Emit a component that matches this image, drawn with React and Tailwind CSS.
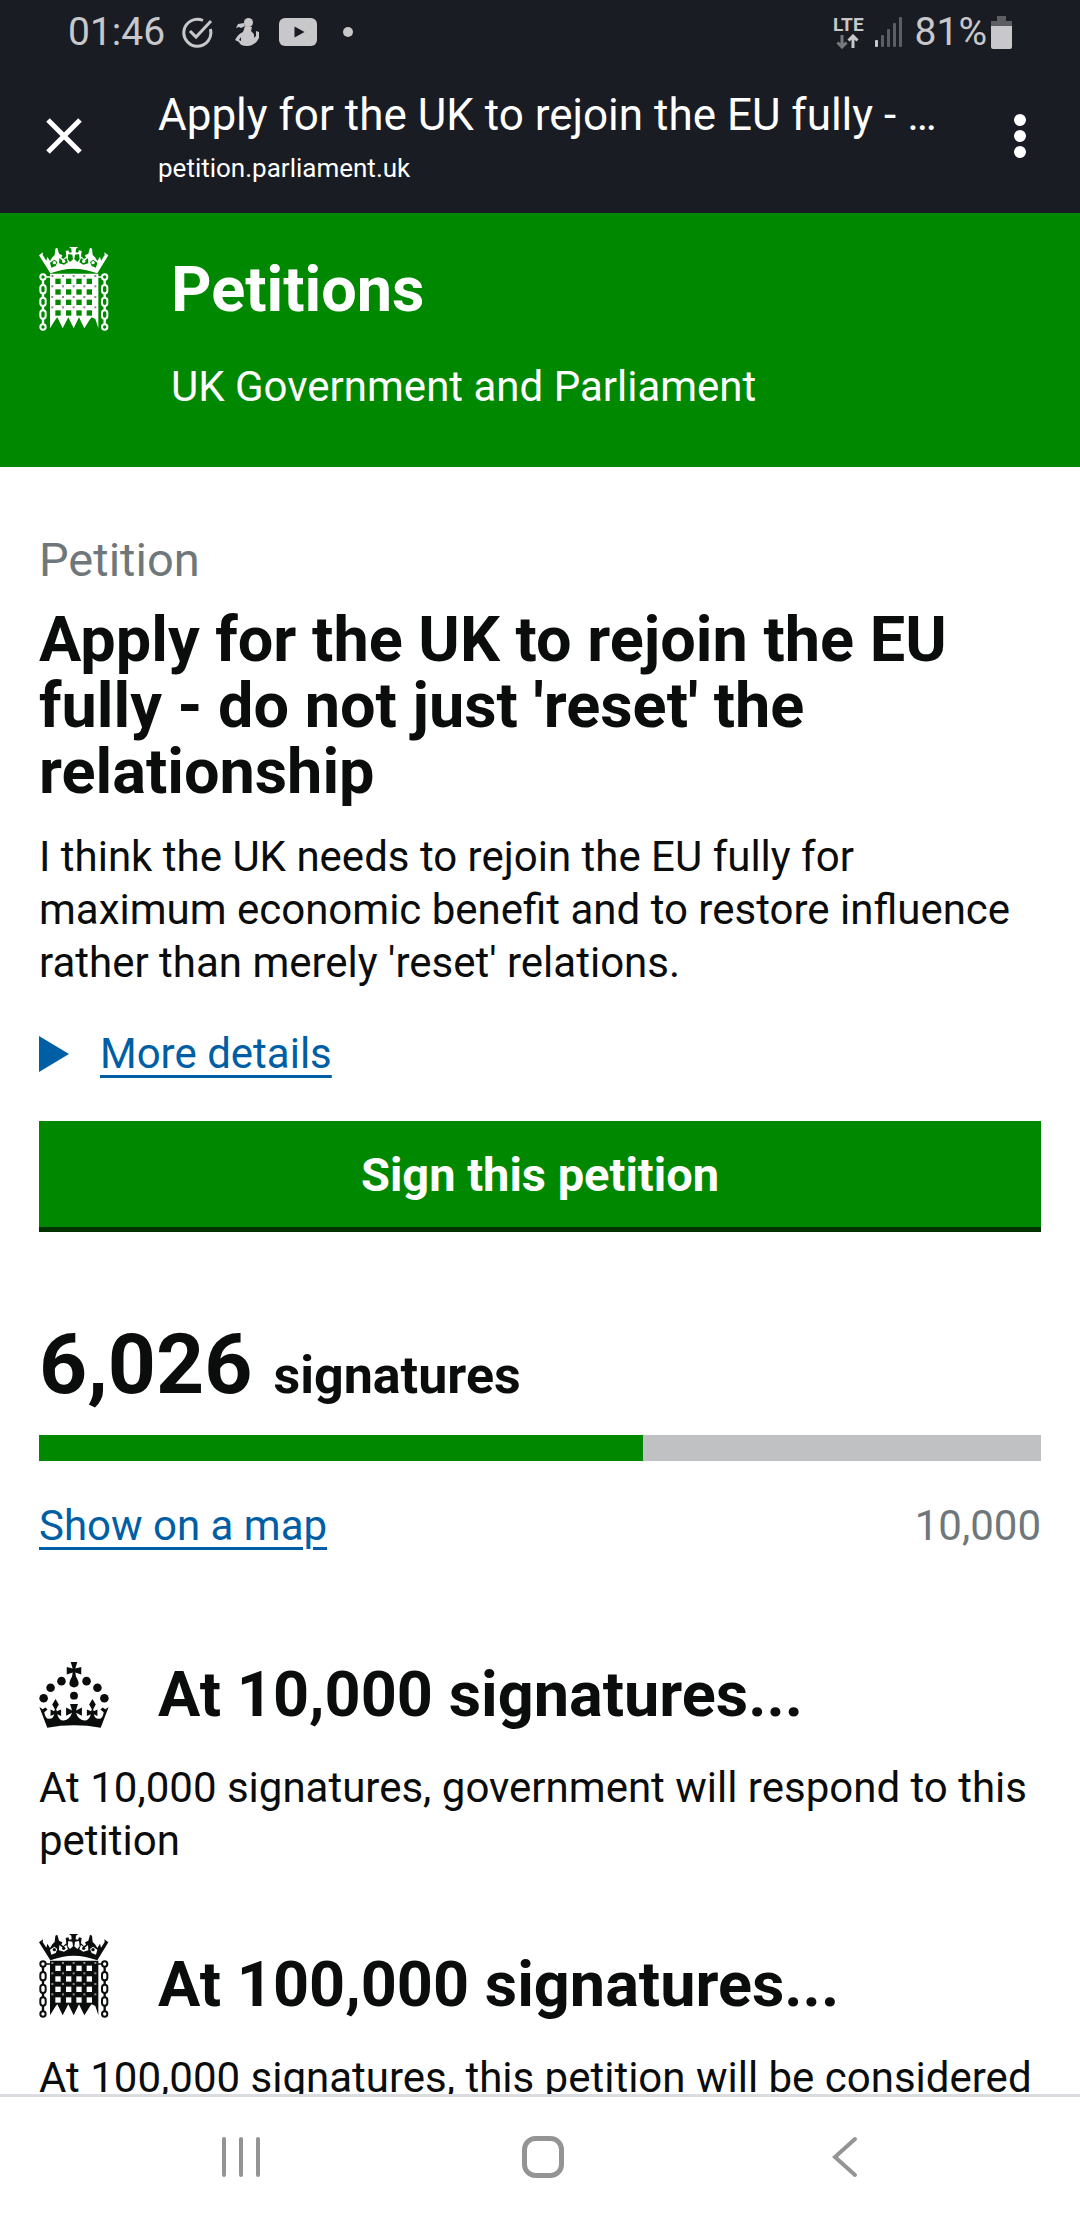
import React from 'react';

const SIGNATURES = 6026;
const TARGET = 10000;

const GRID_COLS = [49, 81, 112, 143];
const GRID_ROWS = [95, 127, 158, 190];
const STUD_COLS = [40, 72, 104, 136, 169];
const STUD_ROWS = [87, 118, 150, 181];

const Chain = ({ x }) => (
    <g fill="none" stroke="currentColor" strokeWidth="6">
        <circle cx={x} cy="90" r="8" />
        <rect x={x - 8} y="114" width="16" height="25" rx="8" />
        <rect x={x - 8} y="152" width="16" height="25" rx="8" />
        <rect x={x - 8} y="190" width="16" height="25" rx="8" />
        <circle cx={x} cy="240" r="8" />
        <path d={`M${x} 98V114M${x} 139V152M${x} 177V190M${x} 215V232`} strokeWidth="7" />
    </g>
);

const Portcullis = ({ holeClass, className }) => (
    <svg viewBox="0 0 210 252" className={className} aria-hidden="true">
        <Chain x={12} />
        <Chain x={197} />
        <path d="M20 90H34M175 90H190" stroke="currentColor" strokeWidth="5" />
        <path
            d="M33 80H178V244L169 216L158 211L153 217L136 244L120 211L104 244L88 211L71 244L55 211L50 217L33 244Z"
            fill="currentColor"
        />
        <g className={holeClass}>
            {GRID_ROWS.map(y => GRID_COLS.map(x => (
                <rect key={`${x}-${y}`} x={x} y={y} width="16" height="16" />
            )))}
        </g>
        <g fill="#8a8a8a">
            {STUD_ROWS.map(y => STUD_COLS.map(x => (
                <rect key={`${x}-${y}`} x={x - 3} y={y - 3} width="6" height="6" />
            )))}
        </g>
        {/* coronet */}
        <path
            d="M34 79L0 25L12 16L11 24L22 41L25 29L33 42L40 31L47 24L49 5L55 2L60 20L70 25L67 32L73 36L82 28L80 12L88 10L91 17L98 16L97 5L90 0H118L111 5L110 16L117 17L120 10L128 12L126 28L135 36L141 32L138 25L148 20L153 2L159 5L161 24L168 31L175 42L183 29L186 41L197 24L196 16L208 25L175 79Q104 51 34 79Z"
            fill="currentColor"
        />
        <g className={holeClass}>
            <path d="M33 47L46 38L55 45L50 57L37 62Z" />
            <path d="M61 33L71 41L82 33L87 46L75 53L60 49Z" />
            <path d="M88 21L100 23L102 37L93 45L86 37Z" />
            <path d="M120 21L108 23L106 37L115 45L122 37Z" />
            <path d="M147 33L137 41L126 33L121 46L133 53L148 49Z" />
            <path d="M175 47L162 38L153 45L158 57L171 62Z" />
        </g>
        <g fill="currentColor">
            <circle cx="46" cy="47" r="5" />
            <circle cx="74" cy="43" r="5" />
            <circle cx="134" cy="43" r="5" />
            <circle cx="162" cy="47" r="5" />
        </g>
    </svg>
);

const Crown = ({ className }) => (
    <svg viewBox="0 0 210 200" className={className} fill="currentColor" aria-hidden="true">
        <circle cx="13" cy="110" r="13" />
        <circle cx="34" cy="78" r="13" />
        <circle cx="67" cy="58" r="13" />
        <circle cx="143" cy="58" r="13" />
        <circle cx="176" cy="78" r="13" />
        <circle cx="197" cy="110" r="13" />
        <circle cx="105" cy="102" r="12" />
        {/* orb and cross */}
        <path d="M95 0H115L109 20L127 15V38L109 32L111 44Q119 58 119 65A14 12 0 0 1 91 65Q91 58 99 44L101 32L83 38V15L101 20Z" />
        {/* circlet */}
        <path d="M24 199L0 136L10 143L18 138L25 144L15 152Q18 174 31 172Q42 172 45 158L34 164V144L45 149L47 143L39 129L49 112L59 129L51 143L53 149L66 144V164L54 158Q60 178 74 177Q92 176 99 154L81 163V138L99 147L93 127H117L111 147L129 138V163L111 154Q118 176 136 177Q150 178 156 158L144 164V144L157 149L159 143L151 129L161 112L171 129L163 143L165 149L176 144V164L165 158Q168 172 179 172Q192 174 195 152L185 144L192 138L200 143L210 136L186 199Q105 185 24 199Z" />
    </svg>
);

const StatusBar = () => (
    <div className="flex h-16 items-center justify-between px-17 text-[#c8c8ca]">
        <div className="flex items-center">
            <span className="text-[39px] leading-[46px]">01:46</span>
            <svg viewBox="0 0 32 32" className="ml-4 size-8" fill="none" stroke="currentColor" strokeWidth="3">
                <path d="M22 4.5A13.500 13.500 0 1 0 29.300 13" />
                <path d="M9 15L15 21L30 5" />
            </svg>
            <svg viewBox="0 0 24 28" className="ml-[22px] h-7 w-6" fill="currentColor">
                <circle cx="13.500" cy="4.500" r="4.500" />
                <path d="M9 5L3 6L1 10L4 9L6 10L10 8ZM10 8L17 9L16 13Q20 16 19 20L21 18L21 13L24 14V20Q20 28 12 28Q5 28 4 24L0 22Q3 16 8 14ZM6 19L4 22L6 23Z" fillRule="evenodd" />
            </svg>
            <svg viewBox="0 0 38 28" className="ml-5 h-7 w-[38px]">
                <rect width="38" height="28" rx="6" fill="currentColor" />
                <path d="M15.500 8.500L25.500 14L15.500 19.500Z" fill="#1a1c24" />
            </svg>
            <span className="ml-[26px] size-[10px] rounded-full bg-current" />
        </div>
        <div className="flex items-center">
            <div className="flex flex-col items-center">
                <span className="text-[19px] font-bold leading-[18px]">LTE</span>
                <svg viewBox="0 0 24 15" className="h-[15px] w-6" fill="none" strokeWidth="3">
                    <path d="M6 1V13M1.500 8.500L6 13L10.500 8.500" stroke="#77787c" />
                    <path d="M17 14V2M12.500 6.500L17 2L21.500 6.500" stroke="currentColor" />
                </svg>
            </div>
            <svg viewBox="0 0 28 30" className="ml-[11px] h-[30px] w-7" fill="#5d5e63">
                <rect x="0" y="23" width="3" height="7" rx="1" fill="#c8c8ca" />
                <rect x="6" y="18" width="3" height="12" rx="1" />
                <rect x="12" y="12" width="3" height="18" rx="1" />
                <rect x="18" y="6" width="3" height="24" rx="1" />
                <rect x="24" y="0" width="3" height="30" rx="1" />
            </svg>
            <span className="ml-3 text-[39px] leading-[46px]">81%</span>
            <svg viewBox="0 0 21 33" className="ml-1 h-[33px] w-[21px]">
                <path d="M6 0H15V5H21V11H0V5H6Z" fill="#5d5e63" />
                <path d="M0 10H21V31Q21 33 19 33H2Q0 33 0 31Z" fill="currentColor" />
            </svg>
        </div>
    </div>
);

const BrowserBar = () => (
    <div className="flex h-[149px] pl-[46px] pr-[49px] text-white">
        <button aria-label="Close" className="mt-[54px] size-9 shrink-0">
            <svg viewBox="0 0 36 36" className="size-9" fill="none" stroke="currentColor" strokeWidth="5">
                <path d="M2 2L34 34M34 2L2 34" />
            </svg>
        </button>
        <div className="ml-[76px] mt-6 min-w-0 flex-1">
            <div className="truncate text-[44px] leading-[54px]">
                Apply for the UK to rejoin the EU fully - do not just 'reset' the relationship
            </div>
            <div className="mt-[10px] text-[26px] leading-8">petition.parliament.uk</div>
        </div>
        <button aria-label="More options" className="ml-[70px] mt-[50px] h-11 w-[22px] shrink-0">
            <svg viewBox="0 0 22 44" className="h-11 w-[22px]" fill="currentColor">
                <circle cx="11" cy="6" r="6" />
                <circle cx="11" cy="22" r="6" />
                <circle cx="11" cy="38" r="6" />
            </svg>
        </button>
    </div>
);

const Threshold = ({ icon, title, children }) => (
    <section>
        <div className="flex items-end gap-[49px]">
            {icon}
            <h2 className="text-[63px] font-bold leading-[66px]">{title}</h2>
        </div>
        <p className="mt-[33px] text-[42px] leading-[53px]">{children}</p>
    </section>
);

const NavBar = () => (
    <nav className="flex h-[126px] shrink-0 items-center justify-around border-t-3 border-[#dadce0] bg-white pb-[3px] pl-[90px] pr-[84px] text-[#949494]">
        <button aria-label="Recents" className="p-4">
            <svg viewBox="0 0 42 42" className="size-[42px]" fill="none" stroke="currentColor" strokeWidth="4" strokeLinecap="round">
                <path d="M4 3V39M21 3V39M38 3V39" />
            </svg>
        </button>
        <button aria-label="Home" className="p-4">
            <svg viewBox="0 0 42 42" className="size-[42px]" fill="none" stroke="currentColor" strokeWidth="5">
                <rect x="2.500" y="2.500" width="37" height="37" rx="11" />
            </svg>
        </button>
        <button aria-label="Back" className="p-4">
            <svg viewBox="0 0 42 42" className="size-[42px]" fill="none" stroke="currentColor" strokeWidth="4" strokeLinecap="round">
                <path d="M31 3L11 21L31 39" />
            </svg>
        </button>
    </nav>
);

export default function App() {
    return (
        <div className="flex h-screen flex-col bg-white font-['Roboto',sans-serif] text-[#0b0c0c]">
            <div className="shrink-0 bg-[#1a1c24]">
                <StatusBar />
                <BrowserBar />
            </div>

            <div className="min-h-0 flex-1 overflow-hidden">
                <header className="flex gap-[62px] bg-[#008800] px-[39px] pb-[54px] pt-[34px] text-white">
                    <Portcullis className="h-[84px] w-[70px] shrink-0" holeClass="fill-[#008800]" />
                    <div className="pt-[10px]">
                        <a href="#home" className="block text-[63px] font-bold leading-[66px]">Petitions</a>
                        <p className="mt-[37px] text-[42px] leading-[53px]">UK Government and Parliament</p>
                    </div>
                </header>

                <main className="px-[39px] pt-[66px]">
                    <h1>
                        <span className="block text-[47px] leading-[53px] text-[#6f777b]">Petition</span>
                        <span className="mt-[21px] block text-[63px] font-bold leading-[66px]">
                            Apply for the UK to rejoin the EU fully - do not just 'reset' the relationship
                        </span>
                    </h1>
                    <p className="mt-[25px] text-[42px] leading-[53px]">
                        I think the UK needs to rejoin the EU fully for maximum economic benefit and to restore influence rather than merely 'reset' relations.
                    </p>

                    <details className="mt-[38px] text-[42px] leading-[53px]">
                        <summary className="flex cursor-pointer list-none items-center gap-[31px] text-[#005ea5]">
                            <svg viewBox="0 0 30 36" className="h-9 w-[30px]" fill="currentColor" aria-hidden="true">
                                <path d="M0 0L30 18L0 36Z" />
                            </svg>
                            <span className="underline decoration-3 underline-offset-[7px]">More details</span>
                        </summary>
                    </details>

                    <button className="mt-[41px] block h-[111px] w-full border-b-5 border-[#003300] bg-[#008800] text-[47px] font-bold leading-[53px] text-white">
                        Sign this petition
                    </button>

                    <p className="mt-[91px] flex items-baseline gap-[21px] font-bold">
                        <span className="text-[84px] leading-[84px]">{SIGNATURES.toLocaleString('en-GB')}</span>
                        <span className="text-[52px] leading-[53px]">signatures</span>
                    </p>
                    <div
                        role="progressbar"
                        aria-label="Signatures"
                        aria-valuenow={SIGNATURES}
                        aria-valuemax={TARGET}
                        className="mt-7 h-[26px] bg-[#bfc1c3]"
                    >
                        <div className="h-full bg-[#008800]" style={{ width: `${(SIGNATURES / TARGET) * 100}%` }} />
                    </div>
                    <div className="mt-[38px] flex justify-between text-[42px] leading-[53px]">
                        <a href="#map" className="text-[#005ea5] underline decoration-3 underline-offset-[7px]">Show on a map</a>
                        <span className="text-[#6f777b]">{TARGET.toLocaleString('en-GB')}</span>
                    </div>

                    <div className="mt-[110px] flex flex-col gap-[67px]">
                        <Threshold title="At 10,000 signatures..." icon={<Crown className="h-[66px] w-[70px] shrink-0" />}>
                            At 10,000 signatures, government will respond to this petition
                        </Threshold>
                        <Threshold
                            title="At 100,000 signatures..."
                            icon={<Portcullis className="h-[84px] w-[70px] shrink-0" holeClass="fill-white" />}
                        >
                            At 100,000 signatures, this petition will be considered for debate in Parliament
                        </Threshold>
                    </div>
                </main>
            </div>

            <NavBar />
        </div>
    );
}
